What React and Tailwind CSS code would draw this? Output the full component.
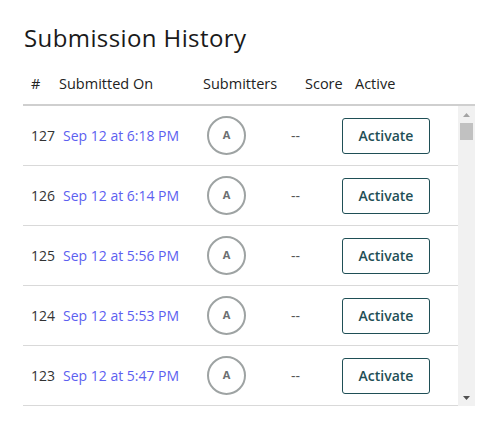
import React from 'react';

const submissions = [
  { id: 127, date: 'Sep 12 at 6:18 PM', submitter: 'A', score: '--' },
  { id: 126, date: 'Sep 12 at 6:14 PM', submitter: 'A', score: '--' },
  { id: 125, date: 'Sep 12 at 5:56 PM', submitter: 'A', score: '--' },
  { id: 124, date: 'Sep 12 at 5:53 PM', submitter: 'A', score: '--' },
  { id: 123, date: 'Sep 12 at 5:47 PM', submitter: 'A', score: '--' },
];

function Avatar({ letter }) {
  return (
    <div className="flex h-[39px] w-[39px] items-center justify-center rounded-full border-2 border-[#9ea3a3] text-[11px] font-bold text-[#6b6f70]">
      {letter}
    </div>
  );
}

function Row({ item }) {
  return (
    <div className="flex h-[60px] shrink-0 items-center border-b border-[#d9d9d9] pl-2 text-[14px]">
      <div className="w-[32px] text-[#333]">{item.id}</div>
      <div className="w-[144px]">
        <a href="#" className="text-[#5d5ff0]">{item.date}</a>
      </div>
      <div className="w-[84px]">
        <Avatar letter={item.submitter} />
      </div>
      <div className="w-[51px] text-[#555]">{item.score}</div>
      <button
        type="button"
        className="h-[36px] w-[88px] rounded-[3px] border border-[#1f4f56] bg-white text-[14px] font-semibold text-[#1f4f56]"
      >
        Activate
      </button>
    </div>
  );
}

// classic scrollbar look, thumb sitting at the top
function Scrollbar() {
  return (
    <div className="flex w-[17px] shrink-0 flex-col bg-[#f1f1f1]">
      <div className="flex h-[17px] items-center justify-center">
        <svg width="7" height="4" viewBox="0 0 7 4">
          <path d="M3.5 0L7 4H0z" fill="#a3a3a3" />
        </svg>
      </div>
      <div className="mx-[2px] h-[17px] bg-[#c1c1c1]" />
      <div className="flex-1" />
      <div className="flex h-[17px] items-center justify-center">
        <svg width="7" height="4" viewBox="0 0 7 4">
          <path d="M0 0H7L3.5 4z" fill="#505050" />
        </svg>
      </div>
    </div>
  );
}

export default function App() {
  return (
    <div className="min-h-screen bg-white pl-[23px] pt-[22px]" style={{ fontFamily: '"Open Sans", sans-serif' }}>
      <h2 className="ml-px text-[24px] font-medium leading-[32px] tracking-[0.4px] text-[#1a1a1a]">Submission History</h2>

      <div className="mt-[10px] w-[452px]">
        <div className="flex h-[42px] items-center border-b-2 border-[#cfcfcf] pl-2 text-[14.5px] font-medium text-[#222]">
          <div className="w-[28px]">#</div>
          <div className="w-[144px]">Submitted On</div>
          <div className="w-[102px]">Submitters</div>
          <div className="w-[50px]">Score</div>
          <div>Active</div>
        </div>

        <div className="flex h-[300px]">
          <div className="flex min-w-0 flex-1 flex-col overflow-hidden">
            {submissions.map((s) => (
              <Row key={s.id} item={s} />
            ))}
          </div>
          <Scrollbar />
        </div>
      </div>
    </div>
  );
}
